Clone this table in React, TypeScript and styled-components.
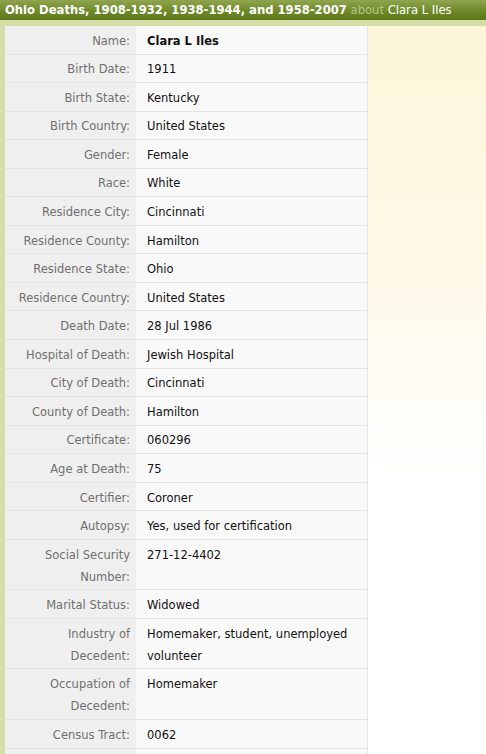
import React from "react";
import styled, { createGlobalStyle } from "styled-components";

const Global = createGlobalStyle`
  html, body { margin: 0; padding: 0; background: #ffffff; }
  body { font-family: "DejaVu Sans", Verdana, sans-serif; }
`;

const Page = styled.div`
  width: 486px;
  height: 754px;
  display: flex;
  flex-direction: column;
  overflow: hidden;
`;

const HeaderBar = styled.div`
  height: 20px;
  line-height: 20px;
  padding-left: 5px;
  white-space: nowrap;
  background: linear-gradient(#8fa54f 0%, #728c2c 50%, #5a7619 100%);
  color: #ffffff;
  font-family: "DejaVu Sans", Verdana, sans-serif;
  font-size: 11.6px;
`;

const Title = styled.span`
  font-weight: bold;
`;

const About = styled.span`
  color: #b7c48a;
`;

const Body = styled.div`
  flex: 1;
  display: flex;
  align-items: flex-start;
  border-top: 6px solid #d4dca8;
  border-left: 5px solid #d4dca8;
  background: #ffffff;
`;

const Table = styled.div`
  width: 362px;
  flex-shrink: 0;
  border-right: 1px solid #e6e6e6;
  background: #f9f9f9;
`;

const Row = styled.div`
  display: flex;
  border-bottom: 1px solid #e4e4e4;
  font-size: 11.5px;
  line-height: 22px;
`;

const Label = styled.div`
  width: 131px;
  min-height: 22px;
  flex-shrink: 0;
  box-sizing: border-box;
  padding: 3.75px 6px 1.8px 10px;
  background: #efefef;
  color: #707070;
  text-align: right;
`;

const Value = styled.div<{ $bold?: boolean }>`
  flex: 1;
  padding: 3.75px 6px 1.8px 11px;
  color: #111111;
  font-weight: ${(p) => (p.$bold ? "bold" : "normal")};
`;

const Side = styled.div`
  flex: 1;
  height: 450px;
  background: linear-gradient(#fdf5d9 0%, #fef9e8 55%, #ffffff 100%);
`;

const rows: [string, string][] = [
  ["Name:", "Clara L Iles"],
  ["Birth Date:", "1911"],
  ["Birth State:", "Kentucky"],
  ["Birth Country:", "United States"],
  ["Gender:", "Female"],
  ["Race:", "White"],
  ["Residence City:", "Cincinnati"],
  ["Residence County:", "Hamilton"],
  ["Residence State:", "Ohio"],
  ["Residence Country:", "United States"],
  ["Death Date:", "28 Jul 1986"],
  ["Hospital of Death:", "Jewish Hospital"],
  ["City of Death:", "Cincinnati"],
  ["County of Death:", "Hamilton"],
  ["Certificate:", "060296"],
  ["Age at Death:", "75"],
  ["Certifier:", "Coroner"],
  ["Autopsy:", "Yes, used for certification"],
  ["Social Security Number:", "271-12-4402"],
  ["Marital Status:", "Widowed"],
  ["Industry of Decedent:", "Homemaker, student, unemployed volunteer"],
  ["Occupation of Decedent:", "Homemaker"],
  ["Census Tract:", "0062"],
];

export default function App() {
  return (
    <Page>
      <Global />
      <HeaderBar>
        <Title>Ohio Deaths, 1908-1932, 1938-1944, and 1958-2007</Title>{" "}
        <About>about</About> Clara L Iles
      </HeaderBar>
      <Body>
        <Table>
          {rows.map(([label, value], i) => (
            <Row key={label}>
              <Label>{label}</Label>
              <Value $bold={i === 0}>{value}</Value>
            </Row>
          ))}
          <Row>
            <Label />
            <Value />
          </Row>
        </Table>
        <Side />
      </Body>
    </Page>
  );
}
